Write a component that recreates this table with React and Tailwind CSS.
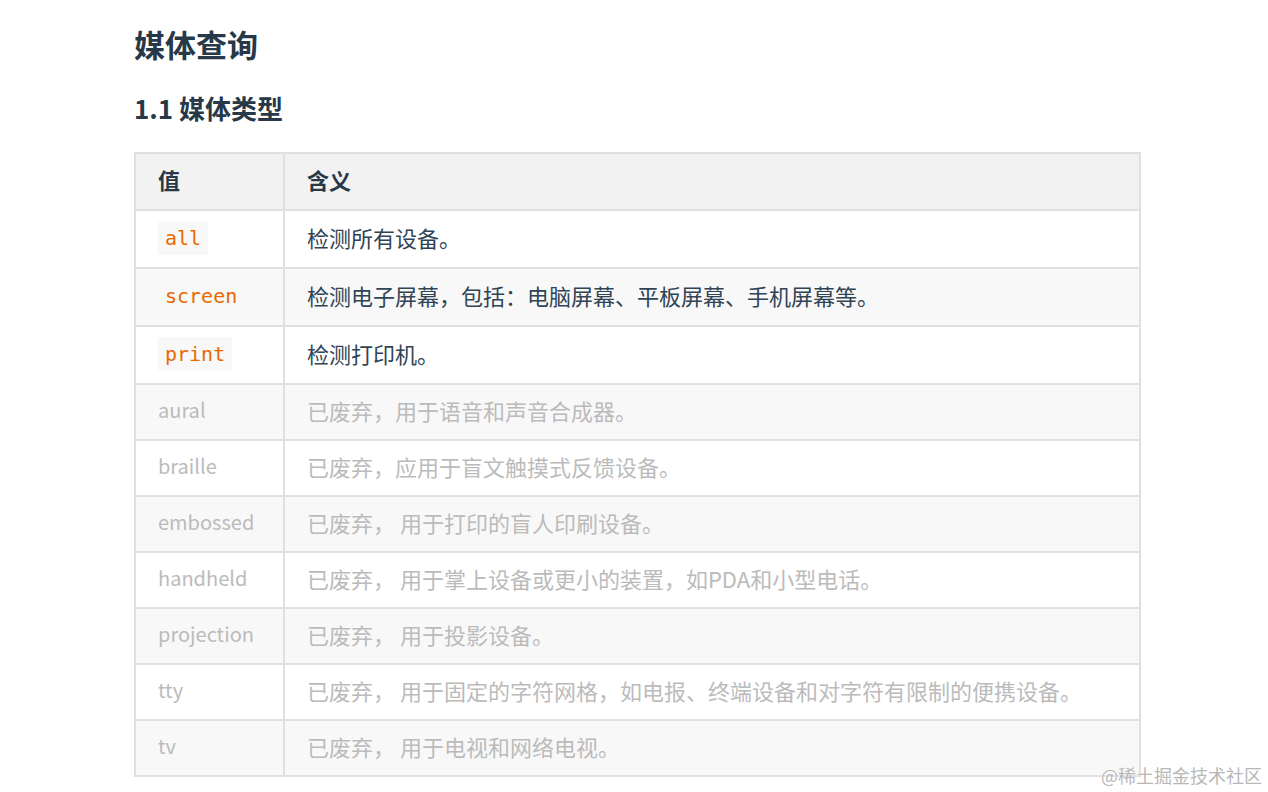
import React from "react";

const rows = [
  { v: "all", d: "检测所有设备。", code: true },
  { v: "screen", d: "检测电子屏幕，包括：电脑屏幕、平板屏幕、手机屏幕等。", code: true },
  { v: "print", d: "检测打印机。", code: true },
  { v: "aural", d: "已废弃，用于语音和声音合成器。" },
  { v: "braille", d: "已废弃，应用于盲文触摸式反馈设备。" },
  { v: "embossed", d: "已废弃， 用于打印的盲人印刷设备。" },
  { v: "handheld", d: "已废弃， 用于掌上设备或更小的装置，如PDA和小型电话。" },
  { v: "projection", d: "已废弃， 用于投影设备。" },
  { v: "tty", d: "已废弃， 用于固定的字符网格，如电报、终端设备和对字符有限制的便携设备。" },
  { v: "tv", d: "已废弃， 用于电视和网络电视。" },
];

export default function App() {
  return (
    <div
      className="relative w-[1268px] h-[792px] bg-white overflow-hidden"
      style={{ fontFamily: '"Noto Sans CJK SC", "Noto Sans", sans-serif' }}
    >
      <div className="pl-[134px] pt-[22px] w-[1141px]">
        <h1 className="text-[31px] leading-[44px] font-bold text-[#273849]">媒体查询</h1>
        <h2 className="mt-[22px] text-[26px] leading-[40px] font-bold text-[#273849]">1.1 媒体类型</h2>
        <table className="mt-[24px] w-[1007px] border-collapse text-[22px] leading-[32px]">
          <thead>
            <tr className="bg-[#f2f2f2] h-[57px]">
              <th className="w-[149px] border-2 border-[#e0e0e0] pl-[22px] pb-[5px] text-left font-bold text-[#273849]">值</th>
              <th className="border-2 border-[#e0e0e0] pl-[22px] pb-[5px] text-left font-bold text-[#273849]">含义</th>
            </tr>
          </thead>
          <tbody>
            {rows.map((r, i) => (
              <tr
                key={r.v}
                className={(i % 2 === 1 ? "bg-[#f8f8f8] " : "bg-white ") + (r.code ? "h-[58px]" : "h-[56px]")}
              >
                <td
                  className={
                    "border-2 border-[#e0e0e0] pl-[22px] pb-[5px] " +
                    (r.code ? "text-[#304455]" : "text-[#bbbbbb] text-[20px]")
                  }
                >
                  {r.code ? (
                    <code
                      className="inline-block align-middle bg-[#f8f8f8] px-[7px] rounded-[3px] text-[20px] leading-[34px] text-[#e96900]"
                      style={{ fontFamily: '"DejaVu Sans Mono", "Liberation Mono", monospace' }}
                    >
                      {r.v}
                    </code>
                  ) : (
                    r.v
                  )}
                </td>
                <td className={"border-2 border-[#e0e0e0] pl-[22px] pb-[5px] " + (r.code ? "text-[#304455]" : "text-[#bbbbbb]")}>
                  {r.d}
                </td>
              </tr>
            ))}
          </tbody>
        </table>
      </div>
      <div
        className="absolute right-[6px] bottom-[6px] text-[18px] leading-[22px] text-[#b8b8b8]"
        style={{ fontFamily: '"Noto Sans CJK SC", sans-serif', textShadow: "0 0 2px #fff" }}
      >
        @稀土掘金技术社区
      </div>
    </div>
  );
}
